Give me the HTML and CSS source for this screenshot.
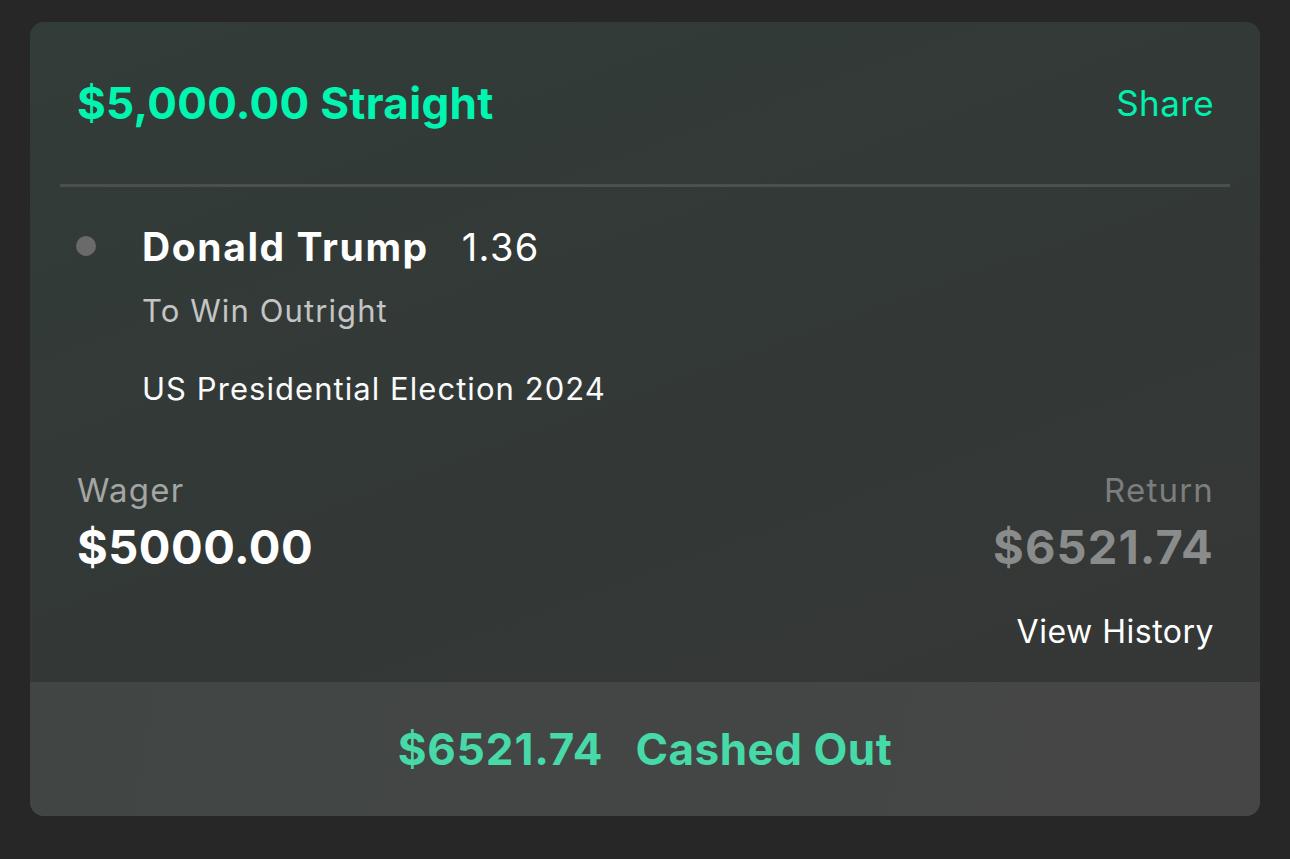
FILE: index.html
```html
<!DOCTYPE html>
<html>
<head>
<meta charset="utf-8">
<link rel="stylesheet" href="styles.css">
</head>
<body>
<div class="card">
  <div class="header">
    <div class="title">$5,000.00 Straight</div>
    <div class="share">Share</div>
  </div>
  <div class="divider"></div>
  <div class="selection">
    <div class="dot"></div>
    <div class="sel-info">
      <div class="sel-top"><span class="name">Donald Trump</span><span class="odds">1.36</span></div>
      <div class="market">To Win Outright</div>
      <div class="event">US Presidential Election 2024</div>
    </div>
  </div>
  <div class="amounts">
    <div class="amount">
      <div class="label">Wager</div>
      <div class="value">$5000.00</div>
    </div>
    <div class="amount right">
      <div class="label muted">Return</div>
      <div class="value muted">$6521.74</div>
    </div>
  </div>
  <div class="history-row"><span class="history">View History</span></div>
  <div class="cashout">
    <span class="co-amount">$6521.74</span><span class="co-label">Cashed Out</span>
  </div>
</div>
</body>
</html>
```
FILE: styles.css
```css
html, body {
  margin: 0;
  padding: 0;
  background: #272727;
}
body {
  font-family: Inter, "Noto Sans", sans-serif;
  padding: 22px 30px 0 30px;
  height: 859px;
  box-sizing: border-box;
}
.card {
  width: 1230px;
  border-radius: 14px;
  overflow: hidden;
  background: linear-gradient(160deg, #323c38 0%, #333836 55%, #363737 100%);
}
.header {
  height: 162px;
  display: flex;
  align-items: center;
  justify-content: space-between;
  padding: 0 46px 0 47px;
}
.title {
  color: #00f5b0;
  font-weight: 700;
  font-size: 44px;
  letter-spacing: 0.3px;
}
.share {
  color: #00f0ae;
  font-size: 35px;
  letter-spacing: 0.4px;
}
.divider {
  height: 3px;
  margin: 0 30px;
  background: #4a504e;
}
.selection {
  display: flex;
  padding: 39px 0 0 46px;
}
.dot {
  width: 20px;
  height: 20px;
  border-radius: 50%;
  background: #6a6a6a;
  margin-top: 10px;
  flex: none;
}
.sel-info {
  margin-left: 46px;
  color: #fff;
}
.sel-top {
  display: flex;
  gap: 33px;
  line-height: 42px;
}
.name {
  font-size: 39px;
  font-weight: 700;
  letter-spacing: 1.6px;
}
.odds {
  font-size: 38px;
  letter-spacing: 1.4px;
}
.market {
  color: #c4c4c4;
  font-size: 31px;
  line-height: 40px;
  margin-top: 23px;
  letter-spacing: 1.1px;
}
.event {
  color: #fafafa;
  font-size: 31px;
  line-height: 40px;
  margin-top: 38px;
  letter-spacing: 1.05px;
}
.amounts {
  display: flex;
  justify-content: space-between;
  padding: 61px 46px 0 47px;
}
.amount .label {
  color: #a4a6a5;
  font-size: 33px;
  line-height: 40px;
  letter-spacing: 1.2px;
}
.amount .value {
  color: #fff;
  font-weight: 700;
  font-size: 47px;
  line-height: 56px;
  margin-top: 9px;
  letter-spacing: 0.5px;
}
.amount.right {
  text-align: right;
}
.amount .label.muted {
  color: #7b7e7d;
}
.amount .value.muted {
  color: #8a8b8b;
  letter-spacing: 1.1px;
}
.history-row {
  display: flex;
  justify-content: flex-end;
  padding: 37px 46px 0 0;
  height: 107px;
  box-sizing: border-box;
}
.history {
  color: #fff;
  font-size: 32px;
  line-height: 40px;
  letter-spacing: 0.5px;
}
.cashout {
  height: 134px;
  display: flex;
  align-items: center;
  justify-content: center;
  gap: 32px;
  background: linear-gradient(100deg, #414644 0%, #444645 60%, #464646 100%);
  color: #47d9a8;
  font-weight: 700;
  font-size: 44px;
}
.co-amount {
  letter-spacing: 0.9px;
}
.co-label {
  letter-spacing: 0.5px;
}
```
